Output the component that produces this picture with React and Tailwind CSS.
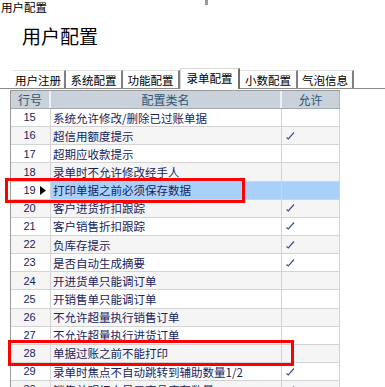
import React from "react";

const rows = [
  [15, "系统允许修改/删除已过账单据", false],
  [16, "超信用额度提示", true],
  [17, "超期应收款提示", false],
  [18, "录单时不允许修改经手人", false],
  [19, "打印单据之前必须保存数据", false],
  [20, "客户进货折扣跟踪", true],
  [21, "客户销售折扣跟踪", true],
  [22, "负库存提示", true],
  [23, "是否自动生成摘要", true],
  [24, "开进货单只能调订单", false],
  [25, "开销售单只能调订单", false],
  [26, "不允许超量执行销售订单", false],
  [27, "不允许超量执行进货订单", false],
  [28, "单据过账之前不能打印", false],
  [29, "录单时焦点不自动跳转到辅助数量1/2", true],
  [30, "销售单明细中显示商品库存数量", true],
];

const tabs = [
  ["用户注册", 54],
  ["系统配置", 57],
  ["功能配置", 57],
  ["录单配置", 60],
  ["小数配置", 58],
  ["气泡信息", 56],
];

function Check() {
  return (
    <svg width="9" height="8" viewBox="0 0 9 8" className="ml-[4px]">
      <path d="M0.5 5.5 L2.3 7 L8 0.5" fill="none" stroke="#3d4f95" strokeWidth="1.2" />
    </svg>
  );
}

export default function App() {
  const cjk = "font-['Noto_Sans_CJK_SC',sans-serif]";
  return (
    <div className={`relative w-[385px] h-[387px] overflow-hidden bg-white ${cjk}`}>
      <div className="h-[14px] pl-[1px] text-[11.5px] leading-[14px] text-black">用户配置</div>
      <div className="mt-[12px] h-[20px] pl-[22px] text-[19px] leading-[20px] text-black">用户配置</div>

      {/* tabs */}
      <div className="mt-[24px] h-[19px] flex items-end pl-[12px] border-b border-[#8a8a8a] text-[11.5px] text-black">
        {tabs.map(([t, w], i) =>
          i === 3 ? (
            <div
              key={t}
              style={{ width: w }}
              className="relative h-[21px] -mb-[1px] bg-white border-l border-t border-[#d8d8d8] border-r-[2px] border-r-[#707070] flex items-start justify-center pt-[1px] leading-[16px]"
            >
              {t}
            </div>
          ) : (
            <div
              key={t}
              style={{ width: w }}
              className="h-[18px] border-r-[2px] border-r-[#808080] border-t border-t-[#e4e4e4] flex items-center justify-center leading-[16px]"
            >
              {t}
            </div>
          )
        )}
      </div>

      {/* table */}
      <div className="ml-[10px] mt-[1px] w-[330px] border-l border-t border-[#9a9a9a]">
        <div className="flex h-[18px] bg-[#c9d1db] border-b border-[#a4abb4] text-[12px] leading-[16px] text-[#2f5874]">
          <div className="w-[40px] border-r-2 border-r-[#eef1f5] flex items-center justify-center">行号</div>
          <div className="w-[231px] border-r-2 border-r-[#eef1f5] flex items-center justify-center">配置类名</div>
          <div className="w-[58px] border-r border-r-[#b0b6be] flex items-center justify-center">允许</div>
        </div>
        {rows.map(([n, name, ok], i) => {
          const sel = n === 19;
          const bg = i % 2 === 1 ? "bg-[#f5f5f5]" : "bg-white";
          const cellBg = sel ? "bg-[#a8d0f8]" : bg;
          return (
            <div key={n} className="flex h-[18.15px] text-[#18235c] text-[11.5px]">
              <div className={`relative w-[40px] border-r border-b border-[#d3d3d3] ${sel ? "bg-white" : bg} flex items-center justify-center font-['Liberation_Sans',sans-serif] text-[11px]`}>
                <span className="-ml-[2px]">{n}</span>
                {sel && (
                  <svg width="6" height="9" viewBox="0 0 6 9" className="absolute right-[4px] top-[4px]">
                    <path d="M0 0 L6 4.5 L0 9 Z" fill="#000" />
                  </svg>
                )}
              </div>
              <div className={`w-[231px] border-r border-b border-[#d3d3d3] ${cellBg} flex items-center pl-[2px] leading-[16px] whitespace-nowrap overflow-hidden`}>
                {name}
              </div>
              <div className={`w-[58px] border-r border-b border-[#d3d3d3] ${cellBg} flex items-center`}>
                {ok && <Check />}
              </div>
            </div>
          );
        })}
      </div>

      {/* overlays: red highlight boxes */}
      <div className="absolute left-[5px] top-[178px] w-[240px] h-[25px] border-[3px] border-[#ff0000]" />
      <div className="absolute left-[8px] top-[340px] w-[286px] h-[26px] border-[3px] border-[#ff0000]" />
      <div className="absolute left-[205px] top-0 w-[3px] h-[5px] bg-[#9a9a9a]" />
    </div>
  );
}
